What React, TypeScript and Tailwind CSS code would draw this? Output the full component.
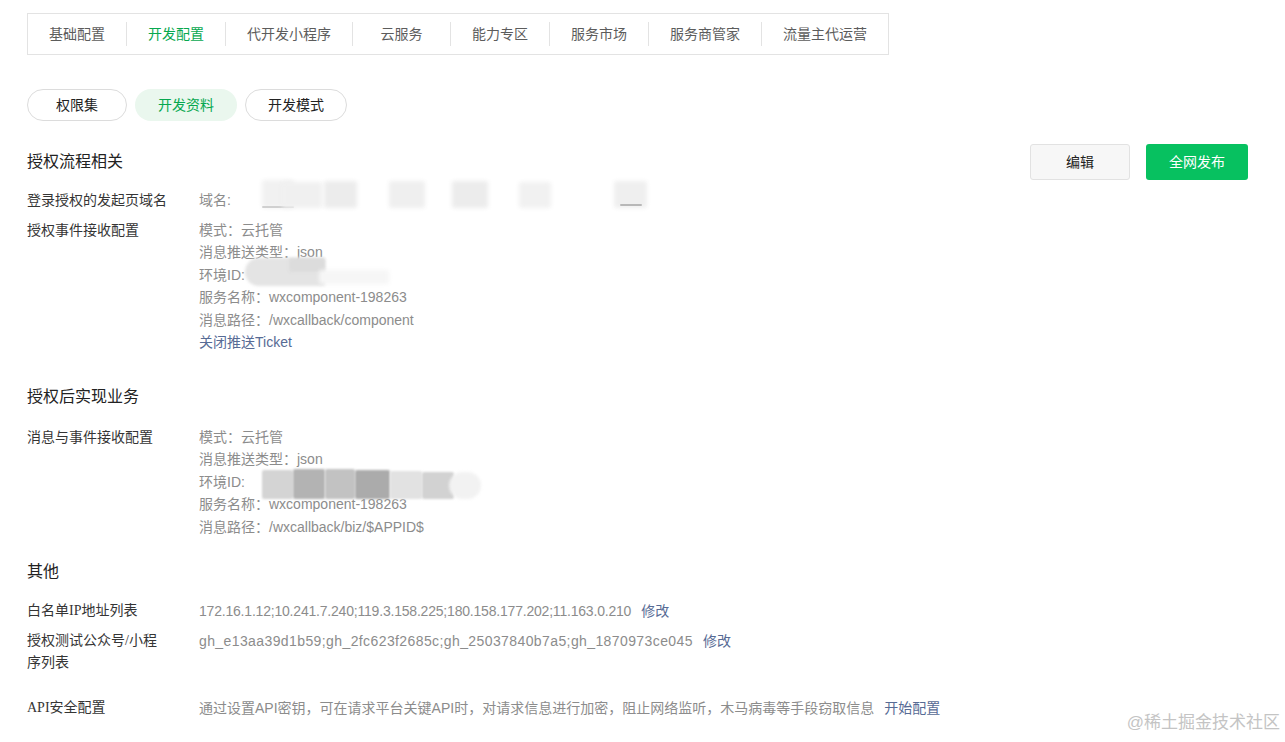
import React from "react";

const tabs = ["基础配置", "开发配置", "代开发小程序", "云服务", "能力专区", "服务市场", "服务商管家", "流量主代运营"];

function Row({ label, children, className = "", serif = false }: { label: React.ReactNode; children: React.ReactNode; className?: string; serif?: boolean }) {
  return (
    <div className={"flex " + className}>
      <div
        className="w-[172px] shrink-0 pr-[30px] text-[14px] leading-[22.5px] text-[#353535]"
        style={serif ? { fontFamily: '"Liberation Serif", "Noto Sans CJK SC", serif' } : undefined}
      >
        {label}
      </div>
      <div className="relative flex-1 text-[14px] leading-[22.5px] text-[#8c8c8c]">{children}</div>
    </div>
  );
}

function Blur({ x, y, w, h, c, r = "2px", b = "2px" }: { x: number; y: number; w: number; h: number; c: string; r?: string; b?: string }) {
  return (
    <div
      className="absolute"
      style={{ left: x, top: y, width: w, height: h, background: c, borderRadius: r, filter: `blur(${b})` }}
    />
  );
}

export default function App() {
  return (
    <div
      className="relative min-h-[742px] w-[1285px] bg-white pl-[27px] pr-[37px] pt-[13px]"
      style={{ fontFamily: '"Liberation Sans", "Noto Sans CJK SC", sans-serif' }}
    >
      {/* top tabs */}
      <div className="flex h-[42px] w-[862px] items-center border border-[#e3e3e3]">
        {tabs.map((t, i) => (
          <div key={t} className="flex shrink-0 items-center">
            {i > 0 && <div className="h-[24px] w-px bg-[#e3e3e3]" />}
            <div
              className={
                "min-w-[97px] whitespace-nowrap px-[21px] text-center text-[14px] leading-[20px] " +
                (i === 1 ? "text-[#07a84f]" : "text-[#5c5c5c]")
              }
            >
              {t}
            </div>
          </div>
        ))}
      </div>

      {/* pills */}
      <div className="mt-[34px] flex gap-[8px]">
        <div className="flex h-[32px] w-[100px] items-center justify-center rounded-full border border-[#dcdcdc] text-[14px] text-[#222]">
          权限集
        </div>
        <div className="flex h-[32px] w-[102px] items-center justify-center rounded-full bg-[#eaf7ee] text-[14px] text-[#07a84f]">
          开发资料
        </div>
        <div className="flex h-[32px] w-[102px] items-center justify-center rounded-full border border-[#dcdcdc] text-[14px] text-[#222]">
          开发模式
        </div>
      </div>

      {/* section 1 title */}
      <div className="mt-[23px] flex h-[36px] items-center justify-between">
        <div className="text-[16px] text-[#222]">授权流程相关</div>
        <div className="flex gap-[16px]">
          <div className="flex h-[36px] w-[100px] items-center justify-center rounded-[3px] border border-[#e2e2e2] bg-[#f7f7f7] text-[14px] text-[#222]">
            编辑
          </div>
          <div className="flex h-[36px] w-[102px] items-center justify-center rounded-[3px] bg-[#07c160] text-[14px] text-white">
            全网发布
          </div>
        </div>
      </div>

      <div className="mt-[9px]">
        <Row label="登录授权的发起页域名" className="mb-[7px]">
          <div>域名:</div>
          <Blur x={63} y={-9} w={32} h={28} c="#f1f1f1" />
          <Blur x={63} y={17} w={32} h={2} c="#d0d0d0" b="0.5px" />
          <Blur x={83} y={-7} w={40} h={26} c="#f0f0f0" />
          <Blur x={125} y={-8} w={33} h={27} c="#ececec" />
          <Blur x={190} y={-8} w={36} h={27} c="#efefef" />
          <Blur x={253} y={-8} w={36} h={27} c="#ececec" />
          <Blur x={320} y={-7} w={32} h={26} c="#f1f1f1" />
          <Blur x={415} y={-8} w={33} h={27} c="#efefef" />
          <Blur x={421} y={15} w={22} h={2} c="#b8b8b8" b="0.6px" />
        </Row>
        <Row label="授权事件接收配置">
          <div>模式：云托管</div>
          <div>消息推送类型：json</div>
          <div className="relative">
            环境ID:
            <Blur x={46} y={-6} w={80} h={28} c="#e4e4e4" r="14px 2px 2px 14px" b="1.5px" />
            <Blur x={90} y={-6} w={36} h={14} c="#dcdcdc" b="1.5px" />
            <Blur x={120} y={6} w={70} h={14} c="#f6f6f6" b="2px" />
          </div>
          <div>服务名称：wxcomponent-198263</div>
          <div>消息路径：/wxcallback/component</div>
          <div className="text-[#576b95]">关闭推送Ticket</div>
        </Row>
      </div>

      {/* section 2 */}
      <div className="mt-[25px] flex h-[36px] items-center">
        <div className="text-[16px] text-[#222]">授权后实现业务</div>
      </div>
      <div className="mt-[11px]">
        <Row label="消息与事件接收配置">
          <div>模式：云托管</div>
          <div>消息推送类型：json</div>
          <div>环境ID:</div>
          <div>服务名称：wxcomponent-198263</div>
          <div>消息路径：/wxcallback/biz/$APPID$</div>
          <div className="absolute left-0 top-0">
            <Blur x={63} y={44} w={31} h={29} c="#d4d4d4" b="1px" />
            <Blur x={94} y={43} w={32} h={30} c="#b3b3b3" b="1px" />
            <Blur x={126} y={43} w={30} h={30} c="#c2c2c2" b="1px" />
            <Blur x={156} y={44} w={35} h={29} c="#ababab" b="1px" />
            <Blur x={191} y={45} w={32} h={28} c="#e2e2e2" b="1px" />
            <Blur x={223} y={46} w={32} h={27} c="#d2d2d2" b="1px" />
            <Blur x={250} y={46} w={32} h={27} c="#f2f2f2" r="14px" b="1.5px" />
          </div>
        </Row>
      </div>

      {/* section 3 */}
      <div className="mt-[16px] flex h-[36px] items-center">
        <div className="text-[16px] text-[#222]">其他</div>
      </div>
      <div className="mt-[10px]">
        <Row label="白名单IP地址列表" className="mb-[7px]" serif>
          <span className="tracking-[-0.2px]">172.16.1.12;10.241.7.240;119.3.158.225;180.158.177.202;11.163.0.210</span>
          <span className="ml-[10px] text-[#576b95]">修改</span>
        </Row>
        <Row label="授权测试公众号/小程序列表" className="mb-[22px]" serif>
          <span className="tracking-[0.4px]">gh_e13aa39d1b59;gh_2fc623f2685c;gh_25037840b7a5;gh_1870973ce045</span>
          <span className="ml-[10px] text-[#576b95]">修改</span>
        </Row>
        <Row label="API安全配置" serif>
          <span>通过设置API密钥，可在请求平台关键API时，对请求信息进行加密，阻止网络监听，木马病毒等手段窃取信息</span>
          <span className="ml-[10px] text-[#576b95]">开始配置</span>
        </Row>
      </div>

      {/* watermark */}
      <div className="absolute bottom-[7px] right-[5px] text-[17px] text-[#c4c4c4]">@稀土掘金技术社区</div>
    </div>
  );
}
